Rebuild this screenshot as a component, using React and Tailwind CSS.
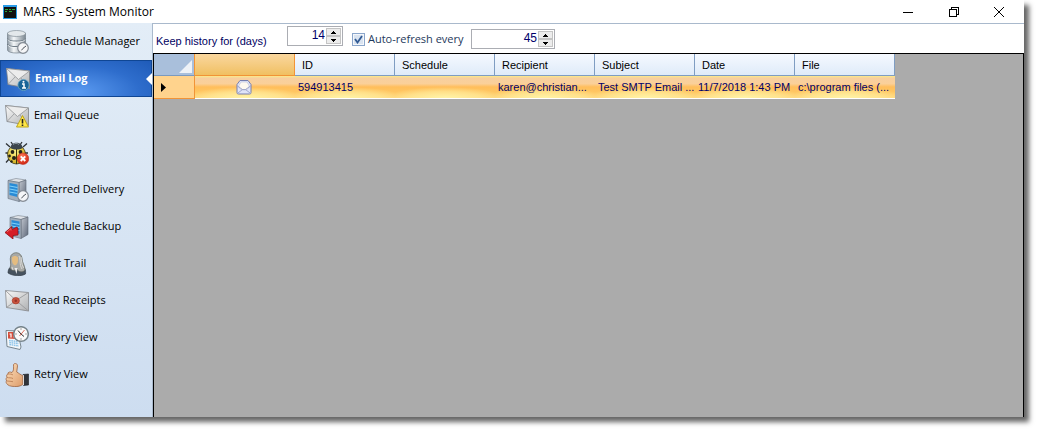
import clsx from 'clsx'

const columns = ['ID', 'Schedule', 'Recipient', 'Subject', 'Date', 'File']

const rows = [
  ['594913415', '', 'karen@christian...', 'Test SMTP Email ...', '11/7/2018 1:43 PM', 'c:\\program files (...'],
]

function Defs() {
  return (
    <svg width="0" height="0" className="absolute" aria-hidden="true">
      <defs>
        <linearGradient id="paper" x1="0" y1="0" x2="1" y2="1">
          <stop offset="0" stopColor="#fafafa" />
          <stop offset="1" stopColor="#aeb0b2" />
        </linearGradient>
        <linearGradient id="metal" x1="0" y1="0" x2="1" y2="0">
          <stop offset="0" stopColor="#8d99a3" />
          <stop offset="0.35" stopColor="#f4f7f9" />
          <stop offset="1" stopColor="#7c8892" />
        </linearGradient>
        <linearGradient id="side" x1="0" y1="0" x2="1" y2="1">
          <stop offset="0" stopColor="#c3c8d0" />
          <stop offset="1" stopColor="#5c6678" />
        </linearGradient>
        <linearGradient id="skin" x1="0" y1="0" x2="1" y2="1">
          <stop offset="0" stopColor="#ffe3c0" />
          <stop offset="1" stopColor="#dc9a68" />
        </linearGradient>
        <radialGradient id="yellow" cx="0.4" cy="0.35" r="0.7">
          <stop offset="0" stopColor="#fff68a" />
          <stop offset="1" stopColor="#c8a312" />
        </radialGradient>
        <radialGradient id="red" cx="0.4" cy="0.3" r="0.8">
          <stop offset="0" stopColor="#ff7a58" />
          <stop offset="1" stopColor="#c81808" />
        </radialGradient>
      </defs>
    </svg>
  )
}

function Icon({ children }) {
  return (
    <svg viewBox="0 0 24 24" className="size-6 shrink-0" aria-hidden="true">
      {children}
    </svg>
  )
}

function Envelope() {
  return (
    <>
      <path d="M.5 1.5 23.5 4v17.5L2 17.5Z" fill="url(#paper)" stroke="#808386" strokeWidth=".8" />
      <path d="M2 17.5 9.5 9.5M23.5 21.5 14.5 10.5" stroke="#94979a" strokeWidth=".8" />
      <path d="M.5 1.5 12.5 12.5 23.5 4Z" fill="#ececec" stroke="#909396" strokeWidth=".8" />
    </>
  )
}

function Clock() {
  return (
    <>
      <circle cx="18" cy="18" r="5.3" fill="#f5f6f8" stroke="#858c95" strokeWidth="1.2" />
      <path d="m21 16-3 2.3-1.5 2" fill="none" stroke="#4d535b" strokeWidth="1" />
    </>
  )
}

function Server() {
  return (
    <>
      <path d="m3 2.5 8-2 10 1.500-7 2.500Z" fill="#dfe3e8" stroke="#78818c" strokeWidth=".6" />
      <path d="m14 4.500 7-2.500v17.500L14 23.500Z" fill="url(#side)" stroke="#5c6572" strokeWidth=".6" />
      <path d="m3 2.500 11 2v19L3 20.500Z" fill="#a4b0bd" stroke="#66717e" strokeWidth=".6" />
      <path d="m4.500 5 8 1.500v12.500l-8-2Z" fill="#288bd6" />
      <path d="m4.500 8 8 1.500M4.500 11l8 1.500M4.500 14l8 1.500" stroke="#7fd0fa" strokeWidth="1.1" />
    </>
  )
}

function DatabaseIcon() {
  return (
    <Icon>
      <path d="M2.5 3v17c0 4 18 4 18 0V3Z" fill="url(#metal)" stroke="#75818b" strokeWidth=".7" />
      <path d="M2.5 8.5c0 3.5 18 3.5 18 0M2.5 14c0 3.5 18 3.5 18 0" fill="none" stroke="#6f7c87" strokeWidth="1.2" />
      <path d="M3 9.5c0 3.5 17 3.5 17 0M3 15c0 3.5 17 3.5 17 0" fill="none" stroke="#f8fafb" strokeWidth=".8" />
      <ellipse cx="11.5" cy="3.5" rx="9" ry="3" fill="#e3e8eb" stroke="#85909a" strokeWidth=".7" />
      <Clock />
    </Icon>
  )
}

function EmailLogIcon() {
  return (
    <Icon>
      <Envelope />
      <circle cx="17.5" cy="18" r="5.6" fill="#176497" stroke="#67a5c5" strokeWidth=".8" />
      <path d="M16 17h2v4m-2 0h4" fill="none" stroke="#fff" strokeWidth="1.5" />
      <circle cx="17.5" cy="14.7" r="1" fill="#fff" />
    </Icon>
  )
}

function EmailQueueIcon() {
  return (
    <Icon>
      <Envelope />
      <path d="m17.5 11.5 6 11.500h-12Z" fill="#ffe747" stroke="#bca41c" strokeWidth="1" strokeLinejoin="round" />
      <path d="M17.5 15v4.500M17.5 20.500V22" stroke="#222" strokeWidth="1.6" />
    </Icon>
  )
}

function BugIcon() {
  return (
    <Icon>
      <path
        d="M5 6 1 2.500M18 6l4-3.500M4 12H.5M20 12h3M5 17l-4 4.500M8 4 6 1M15 4l2-3"
        stroke="#2d3135"
        strokeWidth="1.3"
      />
      <ellipse cx="11.5" cy="13.5" rx="9" ry="9.5" fill="url(#yellow)" stroke="#363312" strokeWidth=".8" />
      <path d="M5.5 7c0-7 12-7 12 0-3 2-9 2-12 0Z" fill="#3c454d" />
      <path d="M8 3.500c2-1.500 4-1.500 6 0" fill="none" stroke="#8d99a2" />
      <path d="M11.5 8v15" stroke="#37340f" />
      <g fill="#22231b">
        <circle cx="7.5" cy="11" r="1.9" />
        <circle cx="15.5" cy="11" r="1.9" />
        <circle cx="4.5" cy="15" r="1.4" />
        <circle cx="9" cy="17" r="2" />
        <circle cx="6.5" cy="20.5" r="1.2" />
      </g>
      <circle cx="18" cy="17.7" r="5.8" fill="url(#red)" stroke="#bd2814" strokeWidth=".5" />
      <path d="m15.700 15.400 4.600 4.600m0-4.600-4.600 4.600" stroke="#fff" strokeWidth="1.8" />
    </Icon>
  )
}

function DeferredIcon() {
  return (
    <Icon>
      <Server />
      <Clock />
    </Icon>
  )
}

function BackupIcon() {
  return (
    <Icon>
      <g transform="translate(2)">
        <Server />
      </g>
      <path d="m0 17.500 7-6v3l5-2.500 1 2v6l-5 .5v3.500Z" fill="#d51d25" stroke="#8d1118" strokeWidth=".8" strokeLinejoin="round" />
      <path d="m2 17 4-3.500v2" fill="none" stroke="#f47975" strokeWidth=".8" />
    </Icon>
  )
}

function JudgeIcon() {
  return (
    <Icon>
      <path d="M3 21c0-5 3-7 6-7h7c4 1 5 4 4.500 8-4 2.500-12 2.500-17.500-1Z" fill="#46525e" stroke="#29313a" strokeWidth=".6" />
      <path d="M6 3.500C9-1 16 0 17 6c0 5 3 7 3 12-2 3-7 2-8-1-1 2-6 2-7-1 2-4-1-8 1-12.500Z" fill="#a8a9a6" stroke="#62655f" strokeWidth=".7" />
      <path d="M7 5.500c1-2 5-2 6 0 .5 4-.5 7-3 8-2.500-1-3.500-4-3-8Z" fill="#e4bc80" />
      <path d="M14 4c2 4 0 8 3 13M16 5c1 4 0 6 2.500 11M7 15l1 3" fill="none" stroke="#dededb" strokeWidth=".9" />
      <path d="M9.500 16h3l-1 6Z" fill="#eee" />
    </Icon>
  )
}

function ReceiptIcon() {
  return (
    <Icon>
      <path d="M.5 1.500 23.500 3.500v18.500L1.500 18.500Z" fill="url(#paper)" stroke="#85878a" strokeWidth=".8" />
      <path d="m.5 1.500 10.500 10 12.500-8M1.500 18.500l9.500-7 12.500 10.500" fill="none" stroke="#989a9c" strokeWidth=".9" />
      <ellipse cx="10.8" cy="11.7" rx="3.6" ry="3.2" fill="#c9543e" stroke="#a63a2a" strokeWidth=".7" />
      <circle cx="10.8" cy="11.7" r="1.3" fill="#973127" />
    </Icon>
  )
}

function HistoryIcon() {
  return (
    <Icon>
      <path d="m1 4.500 11.500.5 3.500 16-1 2.500-13-3Z" fill="#f3f7fa" stroke="#77858f" strokeWidth="1" />
      <path d="M3 6h8v7l-8-.5Z" fill="#d44e3c" />
      <path d="M4.500 8H6v3.500M8 8h2l-1 3.500" fill="none" stroke="#fff" strokeWidth="1.2" />
      <path d="m4 14.500 9 1M4.200 16.500l9.500 1M4.300 18.500l9.500 1.500" stroke="#8fc5ea" strokeWidth="1.5" strokeDasharray="1.700 .6" />
      <circle cx="16" cy="8" r="7.3" fill="#fafafa" stroke="#77858c" strokeWidth="1.5" />
      <path d="M16 2.500v1m0 9v1M10.500 8h1m9 0h1" stroke="#555" />
      <path d="m13 4.500 3 3.500 3 2.500" fill="none" stroke="#333" />
      <path d="m19.500 4-5 6" stroke="#d04b38" strokeWidth=".8" />
    </Icon>
  )
}

function ThumbIcon() {
  return (
    <Icon>
      <path d="M18 11.500 23.500 11v11l-5 .5Z" fill="#30343a" stroke="#17191c" strokeWidth=".6" />
      <path d="m17 12.500 2-.5v10l-2 .3Z" fill="#eef0f2" />
      <path
        d="M7 9.500c2-1.500 1.500-5 1.500-8C10-.5 12.500.5 12.500 3c0 2-.8 4-.8 6 2 1 4 3 6 3.500v9c-2 1.500-5 2.300-8 2-4 0-7-1-8-3-.8-1-.8-2 0-2.500-1-1.500-.8-3 .3-3.700-.8-1.800-.2-3 1-3.300C2.500 9 5 8.500 7 9.500Z"
        fill="url(#skin)"
        stroke="#9e6440"
        strokeWidth=".8"
      />
      <path d="M3 11c2 0 4 0 5 1M2 14.500c2 .5 4 0 6 1M2 18c2 .5 4 0 6 .7" fill="none" stroke="#b87a51" strokeWidth=".8" />
    </Icon>
  )
}

const items = [
  { label: 'Schedule Manager', icon: DatabaseIcon, wide: true },
  { label: 'Email Log', icon: EmailLogIcon, active: true },
  { label: 'Email Queue', icon: EmailQueueIcon },
  { label: 'Error Log', icon: BugIcon },
  { label: 'Deferred Delivery', icon: DeferredIcon },
  { label: 'Schedule Backup', icon: BackupIcon },
  { label: 'Audit Trail', icon: JudgeIcon },
  { label: 'Read Receipts', icon: ReceiptIcon },
  { label: 'History View', icon: HistoryIcon },
  { label: 'Retry View', icon: ThumbIcon },
]

function TitleBar() {
  return (
    <header className="flex h-[23px] shrink-0 items-center bg-white pl-[3px] font-['Open_Sans',sans-serif] text-xs text-black">
      <svg viewBox="0 0 14 14" className="size-3.5" aria-hidden="true">
        <path d="M0 0h14v14H0Z" fill="#2a9ce8" />
        <path d="M1 2h12v11H1Z" fill="#111" />
        <path d="M2 4.500h3M6 4.500h2M9 4.500h3M2 6.500h2M6 6.500h3" stroke="#29a63a" />
      </svg>
      <h1 className="ml-1.5 grow whitespace-nowrap">MARS - System Monitor</h1>
      <button aria-label="Minimize" className="flex h-full w-[46px] items-center justify-center">
        <svg viewBox="0 0 10 10" className="size-2.5"><path d="M0 5.500h10" stroke="#000" /></svg>
      </button>
      <button aria-label="Restore" className="flex h-full w-[45px] items-center justify-center">
        <svg viewBox="0 0 10 10" className="size-2.5" fill="none" stroke="#000" shapeRendering="crispEdges">
          <path d="M.5 2.500h7v7h-7ZM2.500 2.500v-2h7v7h-2" />
        </svg>
      </button>
      <button aria-label="Close" className="mr-0.5 flex h-full w-[46px] items-center justify-center">
        <svg viewBox="0 0 10 10" className="size-2.5"><path d="m0 0 10 10M10 0 0 10" stroke="#000" /></svg>
      </button>
    </header>
  )
}

function Sidebar() {
  return (
    <nav className="w-[152px] shrink-0 bg-linear-to-b from-[#e3edf7] to-[#cdddf0] font-['Open_Sans',sans-serif] text-[11px] text-black">
      {items.map(({ label, icon: ItemIcon, active, wide }) => (
        <button
          key={label}
          className={clsx(
            'relative flex h-[37px] w-full items-center pl-[5px] text-left whitespace-nowrap',
            wide ? 'gap-4' : 'gap-[5px]',
            active && 'border border-[#0f4694] bg-[radial-gradient(ellipse_at_50%_90%,#5c9cf2,#2e6dcc_60%,#1f5bb8)] pl-1 font-bold text-white',
          )}
        >
          <ItemIcon />
          {label}
          {active && (
            <svg viewBox="0 0 6 12" className="absolute top-3 -right-px h-3 w-1.5" aria-hidden="true">
              <path d="M6 0v12L0 6Z" fill="#fff" />
            </svg>
          )}
        </button>
      ))}
    </nav>
  )
}

function Spinner({ id, label, value, className }) {
  return (
    <span className={clsx('flex h-5 border border-[#abadb3] bg-white', className)}>
      <input
        id={id}
        aria-label={label}
        defaultValue={value}
        className="min-w-0 grow pr-px pb-0.5 text-right text-xs text-[#00006b] outline-none"
      />
      <span className="flex w-4 shrink-0 flex-col p-px pl-0">
        {['Increase', 'Decrease'].map((name) => (
          <button key={name} aria-label={name} className="flex min-h-0 grow items-center justify-center border border-[#c4c4c4] bg-[#ececec]">
            <svg viewBox="0 0 5 3" className="h-[3px] w-[5px]" shapeRendering="crispEdges">
              <path d={name === 'Increase' ? 'M0 3h5L2.500 0Z' : 'M0 0h5L2.500 3Z'} />
            </svg>
          </button>
        ))}
      </span>
    </span>
  )
}

function Toolbar() {
  return (
    <div className="flex h-[29px] shrink-0 items-start pt-0.5 pl-[3px] text-[11px] text-[#00005f]">
      <label htmlFor="history" className="w-[131px] pt-[7px] whitespace-nowrap">
        Keep history for (days)
      </label>
      <Spinner id="history" value="14" className="w-14" />
      <label className="ml-[9px] flex w-[119px] items-center gap-[3px] pt-[5px] font-['Open_Sans',sans-serif] whitespace-nowrap text-[#1e395b]">
        <span className="grid shrink-0 place-items-center">
          <input
            type="checkbox"
            defaultChecked
            className="col-start-1 row-start-1 size-[13px] appearance-none border border-[#8ba6cb] bg-[#d9e3f0] shadow-[inset_0_0_0_1px_#f4f7fb]"
          />
          <svg viewBox="0 0 9 9" className="pointer-events-none col-start-1 row-start-1 size-[9px]" fill="none" stroke="#315a94" strokeWidth="1.8">
            <path d="m1 4 2.500 3.500L8 1" />
          </svg>
        </span>
        Auto-refresh every
      </label>
      <Spinner id="refresh" label="Refresh interval" value="45" className="mt-[3px] w-[84px]" />
    </div>
  )
}

function MailOpen() {
  return (
    <svg viewBox="0 0 16 16" className="mx-auto size-4" aria-label="Email">
      <path d="M1 5.500 4 1.500h8l3 4v8c0 1-.5 1.500-1.500 1.500h-11C1.500 15 1 14.500 1 13.500Z" fill="#dfe4f8" stroke="#777fae" />
      <path d="m3 6.500 2-3.500h6l2 3.500V9L9.500 11h-3L3 9Z" fill="#fffaf0" stroke="#bbc0da" strokeWidth=".6" />
      <path d="m1.500 7 5 3.500h3l5-3.500M2 14l4.500-3.500M14 14l-4.500-3.500" fill="none" stroke="#8f98c3" strokeWidth=".8" />
    </svg>
  )
}

function LogGrid() {
  return (
    <table className="w-[741px] table-fixed border-separate border-spacing-0 text-[11px] text-black">
      <colgroup>
        <col className="w-[41px]" />
        <col className="w-[100px]" />
        {columns.map((name) => (
          <col key={name} className="w-[100px]" />
        ))}
      </colgroup>
      <thead>
        <tr className="h-[22px]">
          <th aria-label="Select all" className="border-r border-b border-r-[#f29436] border-b-[#7b9abf] bg-[#a9bfdb] p-0 align-bottom">
            <svg viewBox="0 0 13 13" className="mr-0.5 mb-0.5 ml-auto size-[13px]">
              <path d="M13 0v13H0Z" fill="#eef2f7" />
            </svg>
          </th>
          <th aria-label="Type" className="border-r border-b border-[#f29436] bg-linear-to-b from-[#fad79e] to-[#f0c061] p-0" />
          {columns.map((name) => (
            <th key={name} className="border-r border-b border-[#7f9dc2] bg-linear-to-b from-[#f5f9ff] to-[#dfebf9] p-0 pt-0.5 pl-[7px] text-left font-normal">
              {name}
            </th>
          ))}
        </tr>
      </thead>
      <tbody>
        {rows.map((row) => (
          <tr key={row[0]} className="h-[23px]">
            <td className="border-r border-b border-[#f29436] bg-[#ffd38d] p-0 pl-[7px]">
              <svg viewBox="0 0 5 9" className="h-[9px] w-[5px]" aria-label="Current row">
                <path d="M0 0v9l5-4.500Z" />
              </svg>
            </td>
            <td className="border-b border-white bg-[radial-gradient(ellipse_60%_50%_at_50%_100%,#fff3a6,#ffeb9aaa_60%,transparent),linear-gradient(#fbe98a,#f7cf9f_10%,#fad099_35%,#ffbe5b_50%,#ffc763_75%,#ffd57a)] p-0 pr-[3px]">
              <MailOpen />
            </td>
            {row.map((text, i) => (
              <td
                key={columns[i]}
                className="overflow-hidden border-b border-white bg-[radial-gradient(ellipse_60%_50%_at_50%_100%,#fff3a6,#ffeb9aaa_60%,transparent),linear-gradient(#fbe98a,#f7cf9f_10%,#fad099_35%,#ffbe5b_50%,#ffc763_75%,#ffd57a)] p-0 pl-[3px] whitespace-nowrap text-[#00006b]"
              >
                {text}
              </td>
            ))}
          </tr>
        ))}
      </tbody>
    </table>
  )
}

export default function App() {
  return (
    <div className="flex h-screen bg-white pr-[15px] pb-[15px] font-['Liberation_Sans',sans-serif]">
      <Defs />
      <div className="flex min-w-0 grow flex-col bg-white shadow-[5px_5px_5px_#666]">
        <TitleBar />
        <div className="flex min-h-0 grow">
          <Sidebar />
          <main className="flex min-w-0 grow flex-col border-t border-l border-[#a9b9cc]">
            <Toolbar />
            <section className="grow border-t border-r border-l border-black bg-[#ababab]">
              <LogGrid />
            </section>
          </main>
        </div>
      </div>
    </div>
  )
}
